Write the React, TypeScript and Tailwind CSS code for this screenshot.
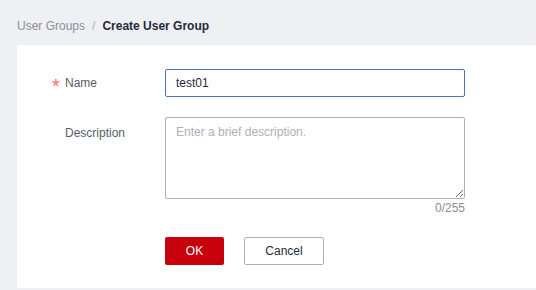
import { useState } from 'react';

const FONT = { fontFamily: '"Liberation Sans", Arial, "Noto Sans CJK SC", sans-serif' };

export default function App() {
  const [name, setName] = useState('test01');
  const [desc, setDesc] = useState('');

  return (
    <div className="min-h-[290px] w-[536px] overflow-hidden bg-[#eff0f4] pl-[17px] text-[12px]" style={FONT}>
      {/* 面包屑 */}
      <div className="flex h-[45px] items-center gap-[7px] pt-[7px] text-[12px]">
        <span className="text-[#8a8e99]">User Groups</span>
        <span className="text-[#adb0b8]">/</span>
        <span className="font-bold text-[#252b3a]">Create User Group</span>
      </div>

      <div className="h-[243px] bg-white pl-[36px] pt-[24px]">
        <div className="flex items-center">
          <label className="flex w-[112px] items-center text-[#575d6c]">
            <span className="-ml-[1px] w-[13px] translate-y-[3px] text-[20px] leading-none text-[#f66f6a]">*</span>
            Name
          </label>
          <input
            value={name}
            onChange={(e) => setName(e.target.value)}
            className="h-[28px] w-[300px] rounded-[2px] border border-[#526ecc] px-[10px] text-[12px] text-[#252b3a] outline-none"
          />
        </div>

        <div className="mt-[20px] flex items-start">
          <label className="w-[112px] pl-[12px] pt-[7px] text-[#575d6c]">Description</label>
          <div className="flex w-[300px] flex-col">
            <textarea
              value={desc}
              onChange={(e) => setDesc(e.target.value)}
              placeholder="Enter a brief description."
              className="h-[82px] w-[300px] rounded-[2px] border border-[#adb0b8] px-[10px] py-[5px] text-[12px] text-[#252b3a] outline-none placeholder:text-[#adb0b8]"
            />
            <div className="mt-[1px] text-right leading-[16px] text-[#8a8e99]">0/255</div>
          </div>
        </div>

        <div className="ml-[112px] mt-[21px] flex gap-[20px]">
          <button className="h-[28px] w-[59px] rounded-[2px] bg-[#c7000b] text-[12px] text-white">OK</button>
          <button className="h-[28px] w-[80px] rounded-[2px] border border-[#adb0b8] bg-white text-[12px] text-[#252b3a]">
            Cancel
          </button>
        </div>
      </div>
    </div>
  );
}
